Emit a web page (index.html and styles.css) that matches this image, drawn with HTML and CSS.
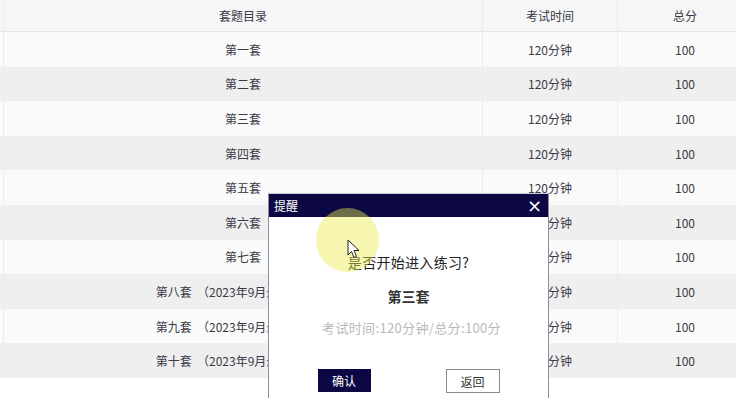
FILE: index.html
```html
<!DOCTYPE html>
<html lang="zh">
<head>
<meta charset="utf-8">
<link rel="stylesheet" href="styles.css">
</head>
<body>
<div class="page">
  <table class="list">
    <thead>
      <tr><th class="c0"></th><th class="c1">套题目录</th><th class="c2">考试时间</th><th class="c3">总分</th></tr>
    </thead>
    <tbody>
      <tr><td class="c0"></td><td>第一套</td><td>120分钟</td><td>100</td></tr>
      <tr><td class="c0"></td><td>第二套</td><td>120分钟</td><td>100</td></tr>
      <tr><td class="c0"></td><td>第三套</td><td>120分钟</td><td>100</td></tr>
      <tr><td class="c0"></td><td>第四套</td><td>120分钟</td><td>100</td></tr>
      <tr><td class="c0"></td><td>第五套</td><td>120分钟</td><td>100</td></tr>
      <tr><td class="c0"></td><td>第六套</td><td>120分钟</td><td>100</td></tr>
      <tr><td class="c0"></td><td>第七套</td><td>120分钟</td><td>100</td></tr>
      <tr><td class="c0"></td><td>第八套 &nbsp;（2023年9月最新考试题)</td><td>120分钟</td><td>100</td></tr>
      <tr><td class="c0"></td><td>第九套 &nbsp;（2023年9月最新考试题)</td><td>120分钟</td><td>100</td></tr>
      <tr><td class="c0"></td><td>第十套 &nbsp;（2023年9月最新考试题)</td><td>120分钟</td><td>100</td></tr>
    </tbody>
  </table>
</div>

<div class="dialog">
  <div class="dialog-title">
    <span>提醒</span>
    <span class="close">×</span>
  </div>
  <div class="dialog-body">
    <p class="ask">是否开始进入练习?</p>
    <p class="name">第三套</p>
    <p class="info">考试时间:120分钟/总分:100分</p>
    <div class="actions">
      <button class="btn primary">确认</button>
      <button class="btn plain">返回</button>
    </div>
  </div>
</div>

<div class="spot"></div>
<svg class="cursor" width="14" height="20" viewBox="0 0 14 20">
  <path d="M1 1 L1 16 L4.5 12.5 L7 18.5 L9.5 17.5 L7 11.5 L12 11.5 Z" fill="#fff" stroke="#222" stroke-width="1" stroke-linejoin="round"/>
</svg>
</body>
</html>
```

FILE: styles.css
```css
html, body {
  margin: 0;
  padding: 0;
  background: #fff;
  overflow: hidden;
  width: 736px;
  height: 398px;
}
body {
  font-family: "Noto Sans CJK SC", "Microsoft YaHei", sans-serif;
  color: #333;
}
.page {
  width: 760px;
}
.list {
  border-collapse: collapse;
  table-layout: fixed;
  width: 749px;
  font-size: 12px;
}
.list th, .list td {
  text-align: center;
  font-weight: normal;
  padding: 0;
  white-space: nowrap;
  overflow: hidden;
  border-left: 1px solid #ececec;
  color: #3a3a48;
}
.list th {
  height: 31px;
  background: #f6f6f6;
  border-bottom: 1px solid #e4e4e4;
}
.list td {
  height: 34.6px;
}
.list tbody tr:nth-child(odd) td { background: #fafafa; }
.list tbody tr:nth-child(even) td { background: #efefef; }
.list .c0 { width: 3px; border-left: none; }
.list .c1 { width: 478px; }
.list .c2 { width: 134px; }
.list .c3 { width: 134px; }

.dialog {
  position: absolute;
  left: 268px;
  top: 193px;
  width: 279px;
  height: 240px;
  background: #fff;
  border: 1px solid #8c8cab;
  border-top: 1px solid #c8c8d4;
}
.dialog-title {
  height: 23px;
  background: #0b0843;
  color: #fff;
  font-size: 12px;
  display: flex;
  align-items: center;
  justify-content: space-between;
  padding: 0 6px 0 5px;
}
.close {
  font-size: 18px;
  line-height: 1;
  font-family: "DejaVu Sans", sans-serif;
}
.dialog-body {
  display: flex;
  flex-direction: column;
  align-items: center;
  padding-top: 33px;
}
.dialog-body p { margin: 0; }
.ask {
  font-size: 14px;
  color: #222;
  line-height: 24px;
  letter-spacing: 0.3px;
}
.name {
  font-size: 14px;
  font-weight: bold;
  color: #333;
  line-height: 24px;
  margin-top: 10px !important;
}
.info {
  font-size: 13px;
  color: #b9b9b9;
  line-height: 24px;
  letter-spacing: 0.35px;
  margin-top: 8px !important;
  padding-left: 6px;
}
.actions {
  display: flex;
  gap: 75px;
  margin-top: 29px;
}
.btn {
  font-family: "Noto Sans CJK SC", sans-serif;
  font-size: 12px;
  height: 23px;
  padding: 0;
  border-radius: 0;
}
.primary {
  width: 53px;
  background: #0b0843;
  color: #fff;
  border: 1px solid #0b0843;
}
.plain {
  width: 54px;
  height: 24px;
  background: #fff;
  color: #333;
  border: 1px solid #8a8a8a;
}
.spot {
  position: absolute;
  left: 316px;
  top: 208px;
  width: 63px;
  height: 64px;
  border-radius: 50%;
  background: rgba(235, 235, 80, 0.45);
  pointer-events: none;
}
.cursor {
  position: absolute;
  left: 347px;
  top: 239px;
}
```
